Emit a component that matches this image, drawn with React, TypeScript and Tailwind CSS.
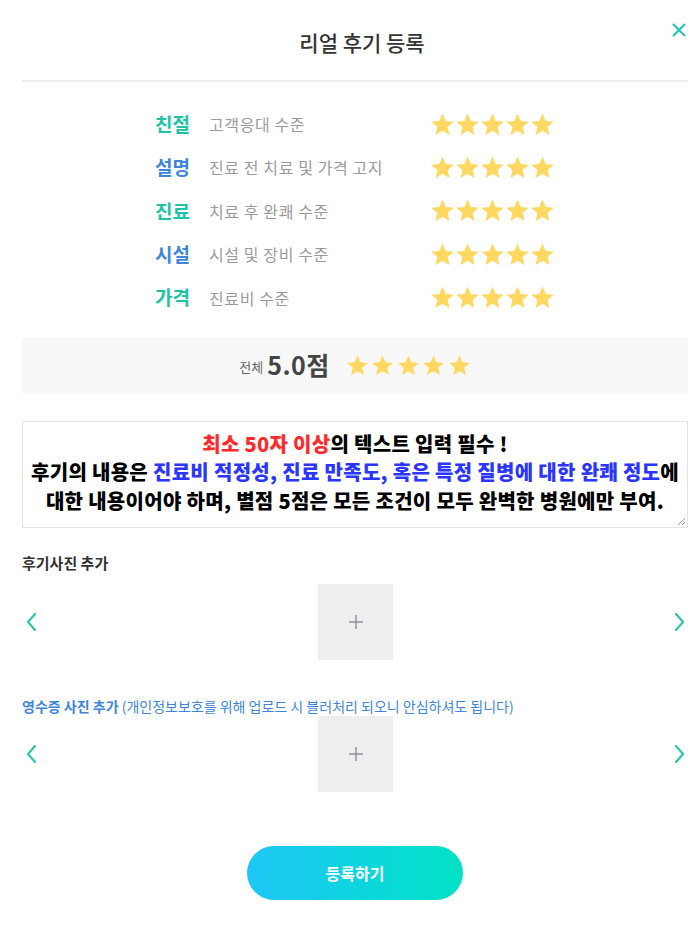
import React from "react";

const font = { fontFamily: '"Noto Sans CJK KR", "Noto Sans", sans-serif' };

const criteria = [
  { label: "친절", desc: "고객응대 수준", color: "text-[#1cc3a5]" },
  { label: "설명", desc: "진료 전 치료 및 가격 고지", color: "text-[#3e86dc]" },
  { label: "진료", desc: "치료 후 완쾌 수준", color: "text-[#1cc3a5]" },
  { label: "시설", desc: "시설 및 장비 수준", color: "text-[#3e86dc]" },
  { label: "가격", desc: "진료비 수준", color: "text-[#1cc3a5]" },
];

function Star({ size }: { size: number }) {
  return (
    <svg width={size} height={size} viewBox="0 0 24 24">
      <path
        d="M12 1.5l3.1 7.2 7.7.6-5.9 5.1 1.8 7.6L12 17.9 5.3 22l1.8-7.6L1.2 9.3l7.7-.6z"
        fill="#ffd862"
      />
    </svg>
  );
}

function Stars({ size, gap }: { size: number; gap: string }) {
  return (
    <div className={`flex ${gap}`}>
      {[0, 1, 2, 3, 4].map((i) => (
        <Star key={i} size={size} />
      ))}
    </div>
  );
}

function Chevron({ dir }: { dir: "left" | "right" }) {
  return (
    <svg width="12" height="20" viewBox="0 0 12 20" fill="none">
      <path
        d={dir === "left" ? "M10 2L3 10l7 8" : "M2 2l7 8-7 8"}
        stroke="#23c4ad"
        strokeWidth="2"
        strokeLinecap="round"
        strokeLinejoin="round"
      />
    </svg>
  );
}

function Uploader() {
  return (
    <div className="flex items-center justify-between">
      <div className="pl-[3px]">
        <Chevron dir="left" />
      </div>
      <div className="w-[75px] h-[76px] bg-[#eeeeee] flex items-center justify-center">
        <svg width="16" height="16" viewBox="0 0 16 16">
          <path d="M8 1v14M1 8h14" stroke="#8e929e" strokeWidth="1.5" />
        </svg>
      </div>
      <div className="pr-[2px]">
        <Chevron dir="right" />
      </div>
    </div>
  );
}

export default function App() {
  return (
    <div className="w-[695px] h-[930px] bg-white relative" style={font}>
      {/* close */}
      <button className="absolute right-[8px] top-[22px]">
        <svg width="16" height="16" viewBox="0 0 16 16">
          <path d="M2 2l12 12M14 2L2 14" stroke="#23c4ad" strokeWidth="2" />
        </svg>
      </button>

      <div className="pl-[22px] pr-[7px]">
        <h1 className="h-[80px] flex items-center justify-center pl-[14px] pt-[6px] text-[21px] font-medium text-[#333]">
          리얼 후기 등록
        </h1>
        <div className="h-[2px] bg-[#ececec]" />

        {/* criteria */}
        <div className="w-[400px] mx-auto pt-[30px] flex flex-col gap-[19.4px]">
          {criteria.map((c) => (
            <div key={c.label} className="flex items-center h-[24px]">
              <span className={`w-[54px] text-[19px] font-bold ${c.color}`}>{c.label}</span>
              <span className="flex-1 text-[16px] tracking-[0.6px] text-[#9a9a9a]">{c.desc}</span>
              <Stars size={25} gap="gap-0" />
            </div>
          ))}
        </div>

        {/* overall */}
        <div className="mt-[28px] h-[55px] bg-[#f8f8f8] flex items-center justify-center">
          <span className="text-[13px] text-[#666] mr-[4px] mt-[3px]">전체</span>
          <span className="text-[25px] font-bold text-[#444] mr-[16px] tracking-[0.5px]">5.0점</span>
          <Stars size={23} gap="gap-[2.5px]" />
        </div>

        {/* text area */}
        <div className="mt-[28px] h-[107px] border border-[#e3e3e3] relative pt-[8px] text-center text-[20px] leading-[28.5px] font-black text-black tracking-[0.3px]">
          <div>
            <span className="text-[#ff2a2a]">최소 50자 이상</span>의 텍스트 입력 필수 !
          </div>
          <div>
            후기의 내용은 <span className="text-[#2a35ff]">진료비 적정성, 진료 만족도, 혹은 특정 질병에 대한 완쾌 정도</span>에
          </div>
          <div>대한 내용이어야 하며, 별점 5점은 모든 조건이 모두 완벽한 병원에만 부여.</div>
          <svg className="absolute right-[1px] bottom-[1px]" width="9" height="9" viewBox="0 0 9 9">
            <path d="M8 1L1 8M8 5L5 8" stroke="#999" strokeWidth="1" />
          </svg>
        </div>

        {/* review photos */}
        <div className="mt-[24px] text-[15px] font-bold text-[#333]">후기사진 추가</div>
        <div className="mt-[10px]">
          <Uploader />
        </div>

        {/* receipt photos */}
        <div className="mt-[36px] text-[14px] text-[#3e86dc]">
          <span className="font-bold">영수증 사진 추가</span> (개인정보보호를 위해 업로드 시 블러처리 되오니 안심하셔도 됩니다)
        </div>
        <div className="mt-[-1px]">
          <Uploader />
        </div>

        <div className="mt-[54px] flex justify-center">
          <button className="w-[216px] h-[54px] rounded-full bg-gradient-to-r from-[#1ec6f6] to-[#02e2c4] text-white text-[16px] font-bold">
            등록하기
          </button>
        </div>
      </div>
    </div>
  );
}
